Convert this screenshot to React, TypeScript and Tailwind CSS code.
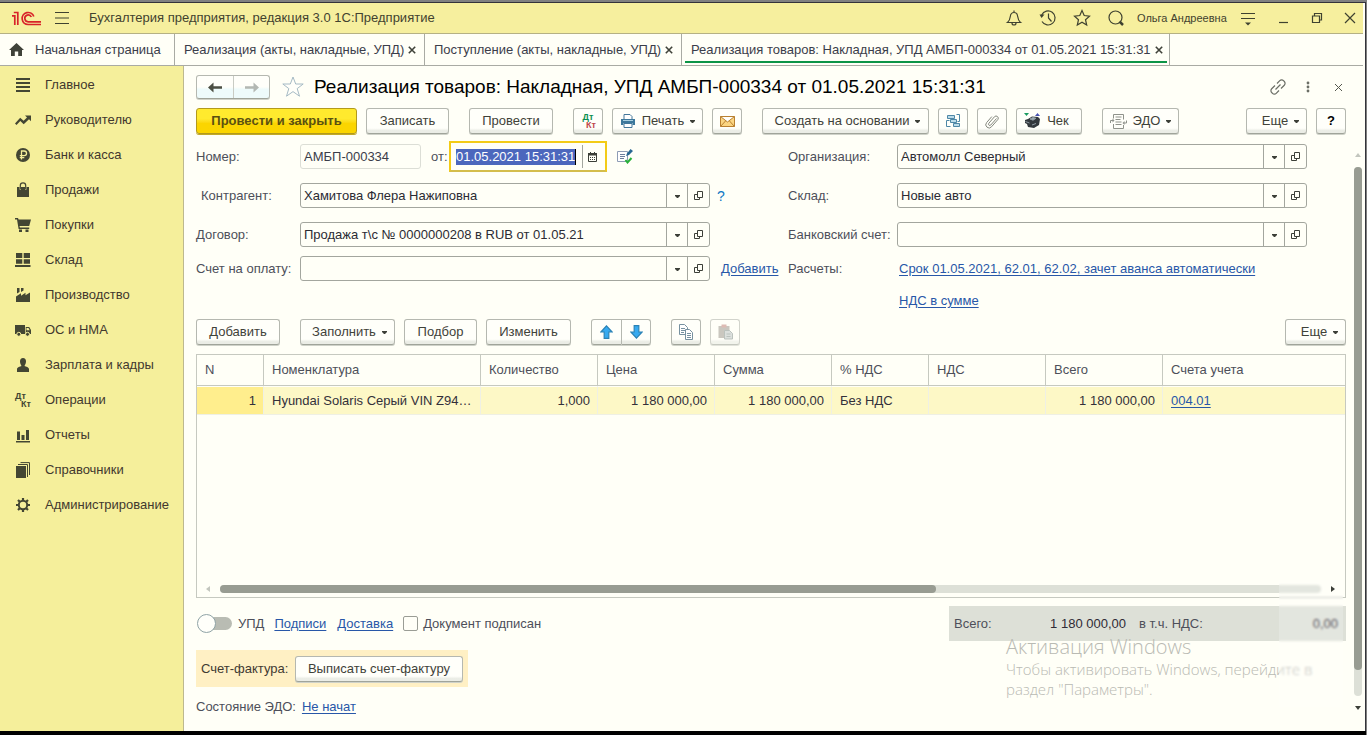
import type { ReactNode } from 'react'

const NAV: { label: string; icon: ReactNode }[] = [
  { label: 'Главное', icon: <path d="M1 1h14v2H1zM1 5h14v2H1zM1 9h14v2H1zM1 13h14v2H1z" /> },
  { label: 'Руководителю', icon: <path d="M0 11.500 5.200 5.800l3.400 3L12 5.400 10 3.500h6v5.800l-2-2-5.300 5L5.300 9 1.500 13z" /> },
  {
    label: 'Банк и касса',
    icon: (
      <>
        <circle cx="8" cy="8" r="7" />
        <path d="M6.500 12.500V4h2.700a2.300 2.300 0 0 1 0 4.700H4.800M4.800 10.600h4.500" fill="none" stroke="#f5ef9b" strokeWidth="1.300" />
      </>
    ),
  },
  {
    label: 'Продажи',
    icon: (
      <>
        <path d="M2 5h2.500v2.500h1.500V5h4v2.500h1.500V5H14v10H2z" />
        <path d="M5.300 7V3.500a2.700 2.700 0 0 1 5.400 0V7" fill="none" stroke="currentColor" strokeWidth="1.200" />
      </>
    ),
  },
  { label: 'Покупки', icon: <path d="M0 1h3l.6 1.500H16L14.200 9H4.500l.4 1.500h9.300V12H3.600L2 2.500H0zM4 12.500h3V15H4zM10.500 12.500h3V15h-3z" /> },
  { label: 'Склад', icon: <path d="M1 1h6.300v5H1zM8.700 1H15v5H8.700zM1 7.200h6.300v4.500H1zM8.700 7.200H15v4.500H8.700zM0 13h15.500v2H0z" /> },
  { label: 'Производство', icon: <path d="M1 15V9.500l5-3.300v2.500l4.500-3v2.500L15 5.500V15zM2 1h2.500v4L2 6.500zM6 1h2.500v2.500L6 5z" /> },
  {
    label: 'ОС и НМА',
    icon: (
      <>
        <path d="M0 3h10v9H0zM10.700 5h3.500L16 8v4h-5.300z" />
        <path d="M11.500 6h2l1.200 2.200h-3.200z" fill="#f5ef9b" />
        <circle cx="3.800" cy="12.300" r="2" stroke="#f5ef9b" />
        <circle cx="12.500" cy="12.300" r="2" stroke="#f5ef9b" />
      </>
    ),
  },
  { label: 'Зарплата и кадры', icon: <path d="M8 1c2 0 3 1.500 3 3.500S9.800 8.300 9.500 9c1.500.8 4.500 1.200 4.500 3v3H2v-3c0-1.800 3-2.200 4.500-3C6.200 8.300 5 6.500 5 4.500S6 1 8 1z" /> },
  { label: 'Операции', icon: null },
  { label: 'Отчеты', icon: <path d="M1 14h14v1.500H1zM2 4.500h3V13H2zM6.500 8h3v5h-3zM11 3h3v10h-3z" /> },
  {
    label: 'Справочники',
    icon: (
      <>
        <path d="M1 4h10v12H1z" />
        <path d="M3 2.500h9.500V15M5.500.6h9V13" fill="none" stroke="currentColor" />
      </>
    ),
  },
  {
    label: 'Администрирование',
    icon: (
      <>
        <circle cx="8" cy="8" r="4.200" fill="none" stroke="currentColor" strokeWidth="2" />
        <path d="M8 1v2.500M8 12.500V15M1 8h2.500M12.500 8H15M3 3l2 2M11 11l2 2M13 3l-2 2M5 11l-2 2" stroke="currentColor" strokeWidth="2.200" />
      </>
    ),
  },
]

const COLUMNS = [
  { title: 'N', value: '1', cell: 'text-right bg-[#ffee8d]', width: 'w-[67px]' },
  { title: 'Номенклатура', value: 'Hyundai Solaris Серый VIN Z94…', cell: 'text-left', width: 'w-[217px]' },
  { title: 'Количество', value: '1,000', cell: 'text-right', width: 'w-[117px]' },
  { title: 'Цена', value: '1 180 000,00', cell: 'text-right', width: 'w-[117px]' },
  { title: 'Сумма', value: '1 180 000,00', cell: 'text-right', width: 'w-[117px]' },
  { title: '% НДС', value: 'Без НДС', cell: 'text-left', width: 'w-[97px]' },
  { title: 'НДС', value: '', cell: 'text-left', width: 'w-[117px]' },
  { title: 'Всего', value: '1 180 000,00', cell: 'text-right', width: 'w-[117px]' },
]

function DtKt({ dt, kt }: { dt: string; kt: string }) {
  return (
    <span className="flex w-4 flex-col text-[9px] font-bold leading-[8px]">
      <span className={dt}>Дт</span>
      <span className={`${kt} text-right`}>Кт</span>
    </span>
  )
}

function Caret() {
  return (
    <svg width="5" height="3" viewBox="0 0 5 3" fill="#3c3f38" className="mt-px" aria-hidden="true">
      <path d="M0 0h5v1L3 3H2L0 1z" />
    </svg>
  )
}

function Btn({ children, className = '', label }: { children: ReactNode; className?: string; label?: string }) {
  return (
    <button
      type="button"
      aria-label={label}
      className={`flex h-[26px] shrink-0 items-center justify-center whitespace-nowrap rounded-[3px] border border-[#b5b8b0] border-b-[#a0a49a] bg-linear-to-b from-[#fffffa] from-80% to-[#ebede6] to-90% text-[#3f4239] shadow-[0_1px_0_#cfd2c9] ${className}`}
    >
      {children}
    </button>
  )
}

function OpenIcon() {
  return (
    <svg width="11" height="10" viewBox="0 0 11 10" fill="none" stroke="#3c3f38" aria-hidden="true">
      <path d="M4.500.5h5v6h-5zM4 3.500H1.500v5h5V7" />
    </svg>
  )
}

function Combo({ id, label, value, inset = false }: { id: string; label: string; value: string; inset?: boolean }) {
  return (
    <>
      <label htmlFor={id} className={inset ? 'pl-[5px]' : ''}>{label}</label>
      <div className="flex h-[25px] overflow-hidden rounded-[3px] border border-[#a3a69e]">
        <input id={id} defaultValue={value} className="min-w-0 flex-1 bg-transparent px-[3px] text-[#2b2b33] outline-none" />
        <button type="button" aria-label="Выбрать" className="flex w-[21px] items-center justify-center border-l border-[#a3a69e]">
          <Caret />
        </button>
        <button type="button" aria-label="Открыть" className="flex w-[22px] items-center justify-center border-l border-[#a3a69e]">
          <OpenIcon />
        </button>
      </div>
    </>
  )
}

function A({ children, className = '' }: { children: ReactNode; className?: string }) {
  return <a href="#" className={`text-[#2857a8] underline underline-offset-2 ${className}`}>{children}</a>
}

function TabClose() {
  return (
    <button type="button" aria-label="Закрыть вкладку" className="flex size-3 items-center justify-end">
      <svg width="8" height="8" viewBox="0 0 8 8" stroke="#3f4239" strokeWidth="1.600"><path d="m.8.8 6.400 6.400M7.200.8.8 7.200" /></svg>
    </button>
  )
}

function HeaderIcon({ label, className, children }: { label: string; className: string; children: ReactNode }) {
  return (
    <button type="button" aria-label={label} className={`flex h-full shrink-0 items-center justify-center ${className}`}>
      <svg width="18" height="18" viewBox="0 0 18 18" fill="none" stroke="#3f4230" strokeWidth="1.200">{children}</svg>
    </button>
  )
}

function Header() {
  return (
    <header className="flex h-[31px] shrink-0 items-center border-b border-[#b5b184] bg-[#f6ef9e]">
      <svg className="ml-3" width="29" height="15" viewBox="0 0 29 15" fill="none" stroke="#d8232a" strokeWidth="1.700" role="img" aria-label="1С">
        <path d="M0 4.800h2.800V14M1.800 1.500h4V14" />
        <path d="M21.800 5.500a6 6 0 1 0-5.600 8H29" />
        <path d="M19.300 6a3.400 3.400 0 1 0-3 4.800H29" />
      </svg>
      <button type="button" aria-label="Меню" className="ml-[14px]">
        <svg width="14" height="12" viewBox="0 0 14 12" stroke="#3f4230"><path d="M0 .5h14M0 6h14M0 11.500h14" /></svg>
      </button>
      <span className="ml-5 text-[#42422f]">Бухгалтерия предприятия, редакция 3.0 1С:Предприятие</span>
      <div className="ml-auto flex h-full items-center">
        <HeaderIcon label="Уведомления" className="w-[34px]">
          <path d="M2.500 13.500c2-1.500 2.500-3.500 2.800-6C5.600 4.800 7 3.500 9 3.500s3.400 1.300 3.700 4c.3 2.500.8 4.500 2.800 6zM9 1.500v2M7 14a2 2 0 0 0 4 0" />
        </HeaderIcon>
        <HeaderIcon label="История" className="w-[34px]">
          <path d="M2.700 6A7 7 0 1 1 3 12.500M9.500 4.500V9l3 3.500" />
          <path d="M.5 5.500h5L2.500 9z" fill="#3f4230" stroke="none" />
        </HeaderIcon>
        <HeaderIcon label="Избранное" className="w-[34px]">
          <path d="m9 1.500 2.200 5 5.300.6-4 3.600 1.200 5.300L9 13.300 4.300 16l1.200-5.300-4-3.600 5.300-.6z" />
        </HeaderIcon>
        <HeaderIcon label="Поиск" className="w-[34px]">
          <circle cx="8.500" cy="8.500" r="6.500" />
          <path d="m12.500 12.500 3.500 3.500" strokeWidth="2.500" />
        </HeaderIcon>
        <span className="ml-1 w-[94px] whitespace-nowrap text-[11px] text-[#42422f]">Ольга Андреевна</span>
        <HeaderIcon label="Настройки" className="w-[34px]">
          <path d="M2 4.500h14M2 9.500h14" />
          <path d="M6 13.500h6l-3 3z" fill="#3f4230" stroke="none" />
        </HeaderIcon>
        <HeaderIcon label="Свернуть" className="w-[35px]"><path d="M5 13.500h9" /></HeaderIcon>
        <HeaderIcon label="Развернуть" className="w-[33px]"><path d="M4.500 7h7v6.500h-7zM6.500 7V4.500h7V11h-2" /></HeaderIcon>
        <HeaderIcon label="Закрыть" className="w-[30px] pl-1"><path d="m4 4 10 10M14 4 4 14" /></HeaderIcon>
      </div>
    </header>
  )
}

function Tabs() {
  return (
    <nav className="flex h-8 shrink-0 border-b border-[#a9aba4] text-[#3b3d4a]">
      <a href="#" className="flex w-[175px] shrink-0 items-center gap-[11px] border-r border-[#a9aba4] pl-[9px]">
        <svg width="15" height="13" viewBox="0 0 15 13" fill="#3f4239" aria-hidden="true"><path d="M7.500 0 15 7h-2v6H9.200V8.500H5.800V13H2V7H0z" /></svg>
        Начальная страница
      </a>
      <div className="flex w-[250px] shrink-0 items-center justify-between whitespace-nowrap border-r border-[#a9aba4] pl-[9px] pr-2">
        <a href="#">Реализация (акты, накладные, УПД)</a>
        <TabClose />
      </div>
      <div className="flex w-[257px] shrink-0 items-center justify-between whitespace-nowrap border-r border-[#a9aba4] pl-[9px] pr-2">
        <a href="#">Поступление (акты, накладные, УПД)</a>
        <TabClose />
      </div>
      <div className="flex w-[488px] shrink-0 border-r border-[#a9aba4] px-[3px] pb-[2px]">
        <div className="flex flex-1 items-center justify-between whitespace-nowrap border-b-2 border-[#0c9447] pl-[6px] pr-1 pt-1">
          <a href="#">Реализация товаров: Накладная, УПД АМБП-000334 от 01.05.2021 15:31:31</a>
          <TabClose />
        </div>
      </div>
    </nav>
  )
}

function Sidebar() {
  return (
    <aside className="w-[184px] shrink-0 border-r border-[#bdb98f] bg-[#f5ef9b] pt-px text-[#42382e]">
      {NAV.map((item) => (
        <a key={item.label} href="#" className="flex h-[35px] items-center gap-[14px] pl-[15px]">
          {item.icon ? (
            <svg width="16" height="16" viewBox="0 0 16 16" fill="currentColor" className="shrink-0 text-[#434633]" aria-hidden="true">{item.icon}</svg>
          ) : (
            <DtKt dt="text-[#434633]" kt="text-[#434633]" />
          )}
          {item.label}
        </a>
      ))}
    </aside>
  )
}

function TitleRow() {
  return (
    <div className="flex h-[42px] shrink-0 items-center">
      <div className="flex h-6 w-[74px] rounded-[3px] border border-[#b5b8b0] border-b-[#a0a49a] bg-linear-to-b from-[#fffffa] from-50% to-[#eefbfb] to-60% shadow-[0_1px_0_#cfd2c9]">
        <button type="button" aria-label="Назад" className="flex w-[37px] items-center justify-center border-r border-[#c9ccc4]">
          <svg width="14" height="11" viewBox="0 0 14 11" fill="#4b4f43"><path d="M0 5.500 5.500.5v3.800H14v2.400H5.500v3.800z" /></svg>
        </button>
        <button type="button" aria-label="Вперед" className="flex flex-1 items-center justify-center">
          <svg width="14" height="11" viewBox="0 0 14 11" fill="#b3b8b3"><path d="M14 5.500 8.500.5v3.800H0v2.400h8.500v3.800z" /></svg>
        </button>
      </div>
      <button type="button" aria-label="В избранное" className="ml-3">
        <svg width="22" height="22" viewBox="0 0 22 22" fill="#fffffa" stroke="#a5bac4"><path d="m11 1 2.700 7h7.500l-6 4.600 2.300 7.600-6.500-4.600-6.500 4.600 2.300-7.600-6-4.600h7.500z" /></svg>
      </button>
      <h1 className="ml-[10px] whitespace-nowrap text-[19px] leading-6 text-black">Реализация товаров: Накладная, УПД АМБП-000334 от 01.05.2021 15:31:31</h1>
      <div className="ml-auto flex items-center">
        <button type="button" aria-label="Ссылка" className="flex w-[30px] justify-center">
          <svg width="16" height="16" viewBox="0 0 16 16" fill="none" stroke="#6b6e66" strokeWidth="1.200">
            <path d="m7 4.500 2.800-2.800a2.600 2.600 0 0 1 3.700 0l.8.8a2.600 2.600 0 0 1 0 3.700L11 9.500M9 11.500l-2.800 2.800a2.600 2.600 0 0 1-3.700 0l-.8-.8a2.600 2.600 0 0 1 0-3.700L5 6.500M5.500 10.500l5-5" />
          </svg>
        </button>
        <button type="button" aria-label="Еще" className="flex w-[30px] justify-center">
          <svg width="4" height="12" viewBox="0 0 4 12" fill="#6b6e66"><circle cx="2" cy="2" r="1.400" /><circle cx="2" cy="6" r="1.400" /><circle cx="2" cy="10" r="1.400" /></svg>
        </button>
        <button type="button" aria-label="Закрыть" className="flex w-[23px] justify-center pl-[7px]">
          <svg width="7" height="7" viewBox="0 0 7 7" stroke="#55584f"><path d="m0 0 7 7M7 0 0 7" /></svg>
        </button>
      </div>
    </div>
  )
}

function Toolbar() {
  return (
    <div className="flex h-[29px] shrink-0 items-start gap-[9px]">
      <button type="button" className="h-[26px] w-[161px] shrink-0 whitespace-nowrap rounded-[3px] border border-[#b39a1b] bg-linear-to-b from-[#ffea2e] from-40% to-[#fbd500] to-60% font-bold text-[#5a5010] shadow-[0_1px_0_#c2a928]">
        Провести и закрыть
      </button>
      <Btn className="w-[83px]">Записать</Btn>
      <Btn className="ml-[11px] w-[84px]">Провести</Btn>
      <Btn className="ml-[11px] w-[30px]" label="Дт Кт"><DtKt dt="text-[#0c8f50]" kt="text-[#c0484c]" /></Btn>
      <Btn className="w-[91px] gap-[6px]">
        <svg width="16" height="16" viewBox="0 0 16 16" aria-hidden="true">
          <path d="M4 6V1.500h6l2 2V6" fill="#fff" stroke="#44779a" />
          <path d="M1 6h14v6h-2.500v-2h-9v2H1z" fill="#3d789c" />
          <path d="M3 7.500h10" stroke="#a9cfe0" />
          <path d="M4 10.500h8v4H4z" fill="#fff" stroke="#44779a" />
        </svg>
        Печать
        <Caret />
      </Btn>
      <Btn className="w-[30px]" label="Отправить">
        <svg width="15" height="11" viewBox="0 0 15 11" fill="#fbd582" stroke="#b98031"><path d="M.5.5h14v10H.5zM.5.5l7 5.500 7-5.500M.5 10.500 5.500 5M14.500 10.500 9.500 5" /></svg>
      </Btn>
      <Btn className="ml-[11px] w-[167px] gap-[6px] pl-1">Создать на основании<Caret /></Btn>
      <Btn className="w-[30px]" label="Структура подчиненности">
        <svg width="16" height="16" viewBox="0 0 16 16" fill="#bcdcea" stroke="#4e87a6">
          <path d="M2.500 2.500h7v3h-7zM5.500 6.500h6v3h-6zM8.500 10.500h6v3h-6z" />
          <path d="M4.500 7.500h-3v6h4M11.500 1.500h3v7h-2" fill="none" />
        </svg>
      </Btn>
      <Btn className="w-[30px]" label="Файлы">
        <svg width="14" height="15" viewBox="0 0 14 15" fill="none" stroke="#85887f">
          <path d="M11.500 4.500 5.800 11a1.300 1.300 0 0 1-2-1.700L9.500 2.700a2.200 2.200 0 0 1 3.300 2.900L6.500 12.800a3.200 3.200 0 0 1-4.900-4.200l5.200-6" />
        </svg>
      </Btn>
      <Btn className="w-[66px] gap-[6px] pr-[5px]">
        <svg width="17" height="16" viewBox="0 0 17 16" aria-hidden="true">
          <path d="M0 0h5L2.500 3z" fill="#1b9c61" />
          <path d="M11 3h5l-2.500-3z" fill="#4550b0" />
          <path d="m1 7 3-1 4-2.500 6 .5 2 2-1 6-5 3-6-1-1-3-2-1z" fill="#33383d" />
          <path d="m6 6 3-1.500 3 .8-3 1.900zM1.500 8.500l4 1.500M8 12l4-1.500" fill="#9fb0ba" stroke="#8f9ba3" />
        </svg>
        Чек
      </Btn>
      <Btn className="ml-[11px] w-[77px] gap-[6px]">
        <svg width="17" height="15" viewBox="0 0 17 15" fill="none" stroke="#8f928b" aria-hidden="true">
          <path d="M3.500 4.500v-4h10v5M3.500 10v4.500h10V11M5.500 3h6M5.500 5.500h5M5.500 8h6M5.500 10.500h6" />
          <path d="M.5 9V6.500H3M16.500 6.500V9H14" />
          <path d="M2.500 4.500v4l2-2zM14.500 7v4l-2-2z" fill="#8f928b" stroke="none" />
        </svg>
        ЭДО
        <Caret />
      </Btn>
      <Btn className="ml-auto w-[61px] gap-[6px] pl-2">Еще<Caret /></Btn>
      <Btn className="w-[30px] font-bold text-black" label="Справка">?</Btn>
    </div>
  )
}

function DocumentForm() {
  return (
    <form className="grid shrink-0 grid-cols-[104px_minmax(0,1fr)_78px_109px_minmax(0,1fr)_39px] grid-rows-[39px_39px_39px_29px_35px] items-center whitespace-nowrap text-[#4d4f5a]">
      <label htmlFor="number">Номер:</label>
      <div className="flex items-center">
        <input id="number" readOnly value="АМБП-000334" className="h-[25px] w-[121px] rounded-[3px] border border-[#dcded6] bg-transparent px-[3px] text-[#3b3d4a] outline-none" />
        <label htmlFor="date" className="w-7 pl-[10px]">от:</label>
        <div className="flex h-[31px] w-[158px] items-center border-2 border-[#f3cb16] border-b-[#d4bd4c] pl-[5px]">
          <input id="date" defaultValue="01.05.2021 15:31:31" className="h-4 w-[120px] border-r border-black bg-[#4c67bd] text-white outline-none" />
          <button type="button" aria-label="Календарь" className="ml-[6px] flex h-[23px] flex-1 items-center justify-center border-l border-[#a3a69e] pr-1">
            <svg width="9" height="10" viewBox="0 0 9 10" aria-hidden="true">
              <path d="M.5 1.500h8v8h-8z" fill="none" stroke="#3c3f38" />
              <path d="M0 1h9v2.500H0zM2 0h1v2H2zM6 0h1v2H6zM2 5h1v1H2zM4 5h1v1H4zM6 5h1v1H6zM2 7h1v1H2zM4 7h1v1H4zM6 7h1v1H6z" fill="#3c3f38" />
            </svg>
          </button>
        </div>
        <button type="button" aria-label="Режим даты" className="ml-[10px]">
          <svg width="16" height="15" viewBox="0 0 16 15" fill="none">
            <path d="M.5 2.500h10v10H.5z" fill="#fff" stroke="#8e9cb5" />
            <path d="M3 5.500h5M3 7.500h5M3 9.500h4" stroke="#6c7f9c" />
            <path d="m9 7 1-2.500L13.500 0 16 2l-4 4z" fill="#286792" />
            <path d="m8.500 11 2 2.500 4-4.500" stroke="#28b13a" strokeWidth="2" />
          </svg>
        </button>
      </div>
      <span />
      <Combo id="org" label="Организация:" value="Автомолл Северный" />
      <span />

      <Combo id="partner" label="Контрагент:" value="Хамитова Флера Нажиповна" inset />
      <button type="button" aria-label="Подсказка" className="pl-[7px] text-left text-[14px] text-[#0f78c4]">?</button>
      <Combo id="store" label="Склад:" value="Новые авто" />
      <span />

      <Combo id="contract" label="Договор:" value="Продажа т\с № 0000000208 в RUB от 01.05.21" />
      <span />
      <Combo id="account" label="Банковский счет:" value="" />
      <span />

      <Combo id="invoice" label="Счет на оплату:" value="" />
      <A className="pl-[11px]">Добавить</A>
      <span>Расчеты:</span>
      <A className="col-span-2 pl-[2px]">Срок 01.05.2021, 62.01, 62.02, зачет аванса автоматически</A>

      <A className="col-span-2 col-start-5 pl-[2px]">НДС в сумме</A>
    </form>
  )
}

function ItemsToolbar() {
  return (
    <div className="flex h-9 shrink-0 items-start gap-[9px] pt-px">
      <Btn className="w-[84px]">Добавить</Btn>
      <Btn className="ml-[11px] w-[95px] gap-[6px] pl-1">Заполнить<Caret /></Btn>
      <Btn className="w-[73px]">Подбор</Btn>
      <Btn className="w-[85px]">Изменить</Btn>
      <div className="ml-[11px] flex">
        <Btn className="w-[31px] rounded-r-none" label="Вверх">
          <svg width="13" height="14" viewBox="0 0 11 12" fill="#37aaf0" stroke="#2b82b5"><path d="M5.500.7 10.300 6H7.500v5.500h-4V6H.7z" /></svg>
        </Btn>
        <Btn className="w-[29px] rounded-l-none border-l-0" label="Вниз">
          <svg width="13" height="14" viewBox="0 0 11 12" fill="#37aaf0" stroke="#2b82b5"><path d="M5.500 11.300 10.300 6H7.500V.5h-4V6H.7z" /></svg>
        </Btn>
      </div>
      <Btn className="ml-[11px] w-[30px]" label="Копировать">
        <svg width="16" height="16" viewBox="0 0 16 16" fill="#fff" stroke="#7791a0">
          <path d="M1.500.5h5l3 3v7h-8zM3 4.500h4M3 6.500h4M3 8.500h3" />
          <path d="M7.500 5.500h4l3 3v7h-7zM9 9.500h4M9 11.500h4M9 13.500h4" />
        </svg>
      </Btn>
      <Btn className="w-[30px] opacity-60" label="Вставить">
        <svg width="15" height="16" viewBox="0 0 15 16" aria-hidden="true">
          <path d="M.5 2h11v12H.5z" fill="#a7a39b" />
          <path d="M3.500.5h5v3h-5z" fill="#c98f87" />
          <path d="M6.500 6.500h5l3 3v5.500h-8z" fill="#c5cccc" stroke="#8e9a98" />
          <path d="M8.500 10h4M8.500 12.500h4" stroke="#8e9a98" />
        </svg>
      </Btn>
      <Btn className="ml-auto w-[61px] gap-[6px] pl-2">Еще<Caret /></Btn>
    </div>
  )
}

function Items() {
  return (
    <div className="flex min-h-0 flex-1 flex-col overflow-hidden border border-[#c6c9c0]">
      <table className="w-full table-fixed border-separate border-spacing-0 whitespace-nowrap">
        <thead>
          <tr className="h-[31px] text-left text-[#4d4f5a]">
            {COLUMNS.map((c) => (
              <th key={c.title} className={`${c.width} border-b border-r border-[#c6c9c0] px-2 font-normal`}>{c.title}</th>
            ))}
            <th className="border-b border-[#c6c9c0] px-2 font-normal">Счета учета</th>
          </tr>
        </thead>
        <tbody>
          <tr className="h-[29px] bg-[#fdf8c6] text-[#33303a]">
            {COLUMNS.map((c) => (
              <td key={c.title} className={`${c.cell} overflow-hidden border-b border-r border-t border-[#eff0e4] border-t-[#fffff7] pl-2 pr-[7px]`}>{c.value}</td>
            ))}
            <td className="border-b border-t border-[#eff0e4] border-t-[#fffff7] px-2"><A>004.01</A></td>
          </tr>
        </tbody>
      </table>
      <div className="mb-1 mt-auto flex h-2 items-center pl-[9px] pr-[10px]">
        <svg width="4" height="6" viewBox="0 0 4 6" fill="#c3c6be" aria-hidden="true"><path d="M4 0v6L0 3z" /></svg>
        <div className="mx-[10px] h-2 flex-1 rounded-full bg-[#dde0d7]">
          <div className="h-2 w-[65%] rounded-full bg-[#989c92]" />
        </div>
        <svg width="4" height="6" viewBox="0 0 4 6" fill="#3c3f38" className="z-20" aria-hidden="true"><path d="M0 0v6l4-3z" /></svg>
      </div>
    </div>
  )
}

function Footer() {
  return (
    <div className="shrink-0 whitespace-nowrap pb-[14px] pt-2 text-[#4d4f5a]">
      <div className="flex h-[35px] items-center">
        <label className="flex items-center gap-[6px] pl-px">
          <input type="checkbox" role="switch" className="sr-only" />
          <span className="flex h-5 w-[35px] items-center">
            <span className="z-10 size-[19px] shrink-0 rounded-full border border-[#8fa3a6] bg-[#fffffa]" />
            <span className="-ml-2 h-[13px] flex-1 rounded-r-full bg-[#b9bcb3]" />
          </span>
          УПД
        </label>
        <A className="ml-[10px]">Подписи</A>
        <A className="ml-[11px]">Доставка</A>
        <label className="ml-[10px] flex items-center gap-[5px]">
          <input type="checkbox" className="size-[15px] appearance-none rounded-[2px] border border-[#9a9d95]" />
          Документ подписан
        </label>
        <div className="ml-auto flex h-full w-[397px] items-center bg-[#dde0d7] pl-[5px] pr-2">
          <span>Всего:</span>
          <span className="ml-auto text-[#2f2b36]">1 180 000,00</span>
          <span className="ml-[13px] w-[80px]">в т.ч. НДС:</span>
          <span className="w-[119px] text-right text-[#2f2b36]">0,00</span>
        </div>
      </div>
      <div className="mt-[9px] flex h-[37px] w-[272px] items-center justify-between bg-[#fff0c4] px-[5px] text-[#3f3a33]">
        Счет-фактура:
        <Btn className="w-[168px]">Выписать счет-фактуру</Btn>
      </div>
      <div className="mt-[10px] flex h-5 items-center gap-[6px]">
        Состояние ЭДО:
        <A>Не начат</A>
      </div>
    </div>
  )
}

function VerticalScroll() {
  return (
    <div className="mr-px flex w-2 shrink-0 flex-col items-center pb-[21px] pt-[87px]">
      <svg width="6" height="4" viewBox="0 0 6 4" fill="#c3c6be" aria-hidden="true"><path d="m3 0 3 4H0z" /></svg>
      <div className="my-[10px] w-2 flex-1 rounded-full bg-[#dde0d7]">
        <div className="h-[95%] w-2 rounded-full bg-[#989c92]" />
      </div>
      <svg width="6" height="4" viewBox="0 0 6 4" fill="#3c3f38" aria-hidden="true"><path d="M0 0h6L3 4z" /></svg>
    </div>
  )
}

export default function App() {
  return (
    <div className="flex h-screen flex-col overflow-hidden border-r border-t-2 border-[#808080] bg-[#fffff7] font-['Liberation_Sans',Arial,sans-serif] text-[13px] leading-4">
      <div className="flex min-h-0 flex-1 flex-col border-t border-[#33333a]">
        <div className="flex min-h-0 flex-1 flex-col border-r border-[#33333a] pr-[2px]">
          <Header />
          <Tabs />
          <div className="relative flex min-h-0 flex-1">
            <Sidebar />
            <main className="flex min-w-0 flex-1 flex-col pl-3 pr-2">
              <TitleRow />
              <Toolbar />
              <DocumentForm />
              <ItemsToolbar />
              <Items />
              <Footer />
            </main>
            <VerticalScroll />
            <div className="pointer-events-none absolute bottom-8 right-[55px] w-[302px] whitespace-nowrap font-['Open_Sans',sans-serif] text-[15px] font-light leading-5 text-[#b9bab3]">
              <p className="text-[20px] leading-6">Активация Windows</p>
              <p>Чтобы активировать Windows, перейдите в</p>
              <p>раздел "Параметры".</p>
            </div>
            <div className="pointer-events-none absolute bottom-6 right-5 z-10 h-[127px] w-16 bg-white/20 backdrop-blur-[1px]" />
          </div>
        </div>
        <div className="h-1 shrink-0 bg-black" />
      </div>
    </div>
  )
}
